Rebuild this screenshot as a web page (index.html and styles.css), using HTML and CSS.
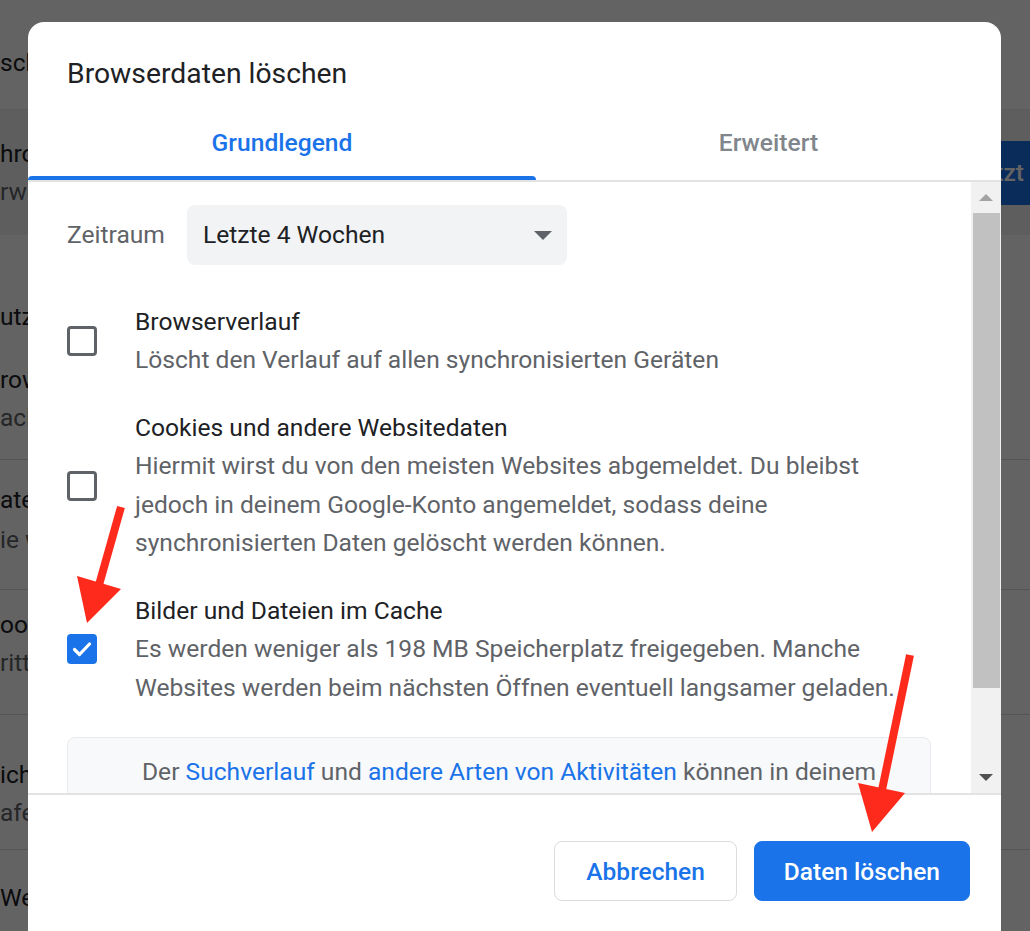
FILE: index.html
```html
<!DOCTYPE html>
<html lang="de">
<head>
    <meta charset="UTF-8">
    <meta name="viewport" content="width=device-width, initial-scale=1.0">
    <title>Browserdaten löschen</title>
    <link rel="stylesheet" href="styles.css">
</head>
<body>
    <!-- Einstellungsseite hinter dem Dialog -->
    <div class="page">
        <div class="page-row row-head">
            <span class="page-title">schutz</span>
        </div>
        <div class="page-row row-sync">
            <div class="page-text">
                <span class="page-title">hrome</span>
                <span class="page-sub">rweiterte Einstellungen</span>
            </div>
            <span class="page-btn">Jetzt</span>
        </div>
        <div class="page-row row-section">
            <span class="page-title">utz und Sicherheit</span>
        </div>
        <div class="page-row row-d">
            <span class="page-title">rowserdaten löschen</span>
            <span class="page-sub">ache leeren</span>
        </div>
        <div class="page-row row-e">
            <span class="page-title">atenschutzleitfaden</span>
            <span class="page-sub">ie wichtigsten Steuerelemente</span>
        </div>
        <div class="page-row row-f">
            <span class="page-title">ookies und andere Websitedaten</span>
            <span class="page-sub">rittanbieter-Cookies sind blockiert</span>
        </div>
        <div class="page-row row-g">
            <span class="page-title">icherheit</span>
            <span class="page-sub">afe Browsing</span>
        </div>
        <div class="page-row row-h">
            <span class="page-title">Website-Einstellungen</span>
        </div>
    </div>

    <div class="scrim"></div>

    <div class="dialog">
        <div class="dialog-head">
            <h2>Browserdaten löschen</h2>
            <div class="tabs">
                <div class="tab active">Grundlegend</div>
                <div class="tab">Erweitert</div>
            </div>
        </div>

        <div class="dialog-body">
            <div class="scroll-content">
                <div class="range">
                    <span class="range-label">Zeitraum</span>
                    <div class="select">
                        <span>Letzte 4 Wochen</span>
                        <span class="select-arrow"></span>
                    </div>
                </div>

                <div class="option">
                    <span class="checkbox"></span>
                    <div class="option-text">
                        <div class="option-label">Browserverlauf</div>
                        <div class="option-desc">Löscht den Verlauf auf allen synchronisierten Geräten</div>
                    </div>
                </div>

                <div class="option">
                    <span class="checkbox"></span>
                    <div class="option-text">
                        <div class="option-label">Cookies und andere Websitedaten</div>
                        <div class="option-desc">Hiermit wirst du von den meisten Websites abgemeldet. Du bleibst jedoch in deinem Google-Konto angemeldet, sodass deine synchronisierten Daten gelöscht werden können.</div>
                    </div>
                </div>

                <div class="option">
                    <span class="checkbox checked">
                        <svg viewBox="0 0 30 30" width="30" height="30"><path d="M7.5 15.5l5 5L22.5 10" fill="none" stroke="#fff" stroke-width="3.2" stroke-linecap="round" stroke-linejoin="round"/></svg>
                    </span>
                    <div class="option-text">
                        <div class="option-label">Bilder und Dateien im Cache</div>
                        <div class="option-desc">Es werden weniger als 198 MB Speicherplatz freigegeben. Manche Websites werden beim nächsten Öffnen eventuell langsamer geladen.</div>
                    </div>
                </div>

                <div class="notice">
                    Der <a href="#">Suchverlauf</a> und <a href="#">andere Arten von Aktivitäten</a> können in deinem Google-Konto gespeichert werden, wenn du angemeldet bist. Du kannst sie jederzeit löschen.
                </div>
            </div>

            <div class="scrollbar">
                <span class="sb-btn"><span class="sb-up"></span></span>
                <span class="sb-thumb"></span>
                <span class="sb-track"></span>
                <span class="sb-btn"><span class="sb-down"></span></span>
            </div>
        </div>

        <div class="dialog-foot">
            <button class="btn">Abbrechen</button>
            <button class="btn btn-primary">Daten löschen</button>
        </div>
    </div>

    <!-- rote Pfeile -->
    <svg class="marks" width="1030" height="931" viewBox="0 0 1030 931">
        <line x1="121" y1="507" x2="99" y2="585" stroke="#fe2a1c" stroke-width="8"/>
        <polygon points="77,576 121,589 87,623" fill="#fe2a1c"/>
        <line x1="910" y1="655" x2="882" y2="790" stroke="#fe2a1c" stroke-width="8"/>
        <polygon points="858,783 905,793 872,832" fill="#fe2a1c"/>
    </svg>
</body>
</html>
```

FILE: styles.css
```css
body {
    font-family: 'Roboto', sans-serif;
    margin: 0;
    padding: 0;
    width: 1030px;
    height: 931px;
    overflow: hidden;
    position: relative;
    background-color: #ffffff;
}

/* Seite im Hintergrund */
.page {
    width: 1060px;
    color: #202124;
    font-size: 24.5px;
}

.page-row {
    display: flex;
    flex-direction: column;
    box-sizing: border-box;
    line-height: 38px;
    white-space: nowrap;
    border-bottom: 1px solid #dadce0;
}

.row-head {
    height: 110px;
    padding-top: 44px;
    border-bottom-color: #e8eaed;
}

.row-sync {
    height: 125px;
    flex-direction: row;
    align-items: center;
    justify-content: space-between;
    background-color: #f1f3f4;
    border-bottom: none;
}

.row-section {
    height: 110px;
    padding-top: 63px;
    border-bottom: none;
}

.row-d {
    height: 115px;
    padding-top: 16px;
}

.row-e {
    height: 130px;
    padding-top: 21px;
}

.row-e .page-sub {
    margin-top: 2px;
}

.row-f {
    height: 125px;
    padding-top: 16px;
}

.row-g {
    height: 135px;
    padding-top: 41px;
}

.row-h {
    height: 120px;
    padding-top: 29px;
    border-bottom: none;
}

.page-text {
    display: flex;
    flex-direction: column;
}

.page-sub {
    color: #5f6368;
}

.page-btn {
    background-color: #1a73e8;
    color: #fff;
    font-weight: 500;
    padding: 0 36px 0 30px;
    line-height: 64px;
    border-radius: 8px;
}

.scrim {
    position: absolute;
    inset: 0;
    background-color: rgba(0, 0, 0, 0.61);
}

/* Dialog */
.dialog {
    position: absolute;
    left: 28px;
    top: 22px;
    width: 973px;
    height: 960px;
    background: #ffffff;
    border-radius: 16px;
    overflow: hidden;
    color: #202124;
    font-size: 24.6px;
}

.dialog-head {
    padding-top: 36px;
    border-bottom: 2px solid #e3e3e3;
}

.dialog-head h2 {
    margin: 0;
    padding-left: 39px;
    font-size: 28.3px;
    font-weight: 400;
    line-height: 32px;
}

.tabs {
    display: grid;
    grid-template-columns: 508px 1fr;
    margin-top: 15px;
}

.tab {
    height: 75px;
    display: flex;
    align-items: center;
    justify-content: center;
    font-weight: 500;
    color: #80868b;
    position: relative;
}

.tab.active {
    color: #1a73e8;
}

.tab.active::after {
    content: "";
    position: absolute;
    left: 0;
    right: 0;
    bottom: 0;
    height: 4px;
    background-color: #1a73e8;
    border-radius: 4px 4px 0 0;
}

.dialog-body {
    display: flex;
    height: 611px;
}

.scroll-content {
    flex: 1;
    overflow: hidden;
    padding: 23px 40px 0 39px;
    line-height: 38.5px;
}

.range {
    display: flex;
    align-items: center;
    gap: 22px;
    margin-bottom: 23px;
}

.range-label {
    color: #5f6368;
}

.select {
    width: 380px;
    height: 60px;
    box-sizing: border-box;
    display: flex;
    align-items: center;
    justify-content: space-between;
    padding: 0 15px 0 16px;
    background-color: #f1f3f4;
    border-radius: 8px;
}

.select-arrow {
    width: 0;
    height: 0;
    border-left: 9.5px solid transparent;
    border-right: 9.5px solid transparent;
    border-top: 9px solid #5f6368;
}

.option {
    display: flex;
    align-items: center;
    padding: 14.5px 0;
}

.checkbox {
    flex: none;
    width: 30px;
    height: 30px;
    box-sizing: border-box;
    border: 3px solid #5f6368;
    border-radius: 4px;
    margin-right: 38px;
}

.checkbox.checked {
    border: none;
    background-color: #1a73e8;
}

.checkbox svg {
    display: block;
}

.option-text {
    flex: 1;
}

.option-desc {
    color: #5f6368;
}

.notice {
    margin-top: 15px;
    background-color: #f8f9fa;
    border: 1px solid #e8eaed;
    border-radius: 8px;
    padding: 15px 38px 15px 58px;
    text-align: center;
    color: #5f6368;
}

.notice a {
    color: #1a73e8;
    text-decoration: none;
}

/* Bildlaufleiste */
.scrollbar {
    width: 30px;
    background-color: #f1f1f1;
    display: flex;
    flex-direction: column;
    align-items: center;
}

.sb-btn {
    height: 31px;
    width: 100%;
    display: flex;
    align-items: center;
    justify-content: center;
}

.sb-up {
    border-left: 7px solid transparent;
    border-right: 7px solid transparent;
    border-bottom: 7px solid #a3a3a3;
}

.sb-down {
    border-left: 7px solid transparent;
    border-right: 7px solid transparent;
    border-top: 7px solid #505050;
}

.sb-thumb {
    width: 27px;
    height: 475px;
    background-color: #c1c1c1;
}

.sb-track {
    flex: 1;
}

.dialog-foot {
    border-top: 2px solid #e3e3e3;
    display: flex;
    justify-content: flex-end;
    gap: 17px;
    padding: 46px 31px 0 0;
}

.btn {
    font-family: 'Roboto', sans-serif;
    font-size: 24.5px;
    font-weight: 500;
    height: 60px;
    padding: 0 31px;
    border-radius: 8px;
    border: 1.5px solid #dadce0;
    background-color: #fff;
    color: #1a73e8;
}

.btn-primary {
    padding: 0 29px;
    background-color: #1a73e8;
    border-color: #1a73e8;
    color: #fff;
}

.marks {
    position: absolute;
    top: 0;
    left: 0;
    pointer-events: none;
}
```
